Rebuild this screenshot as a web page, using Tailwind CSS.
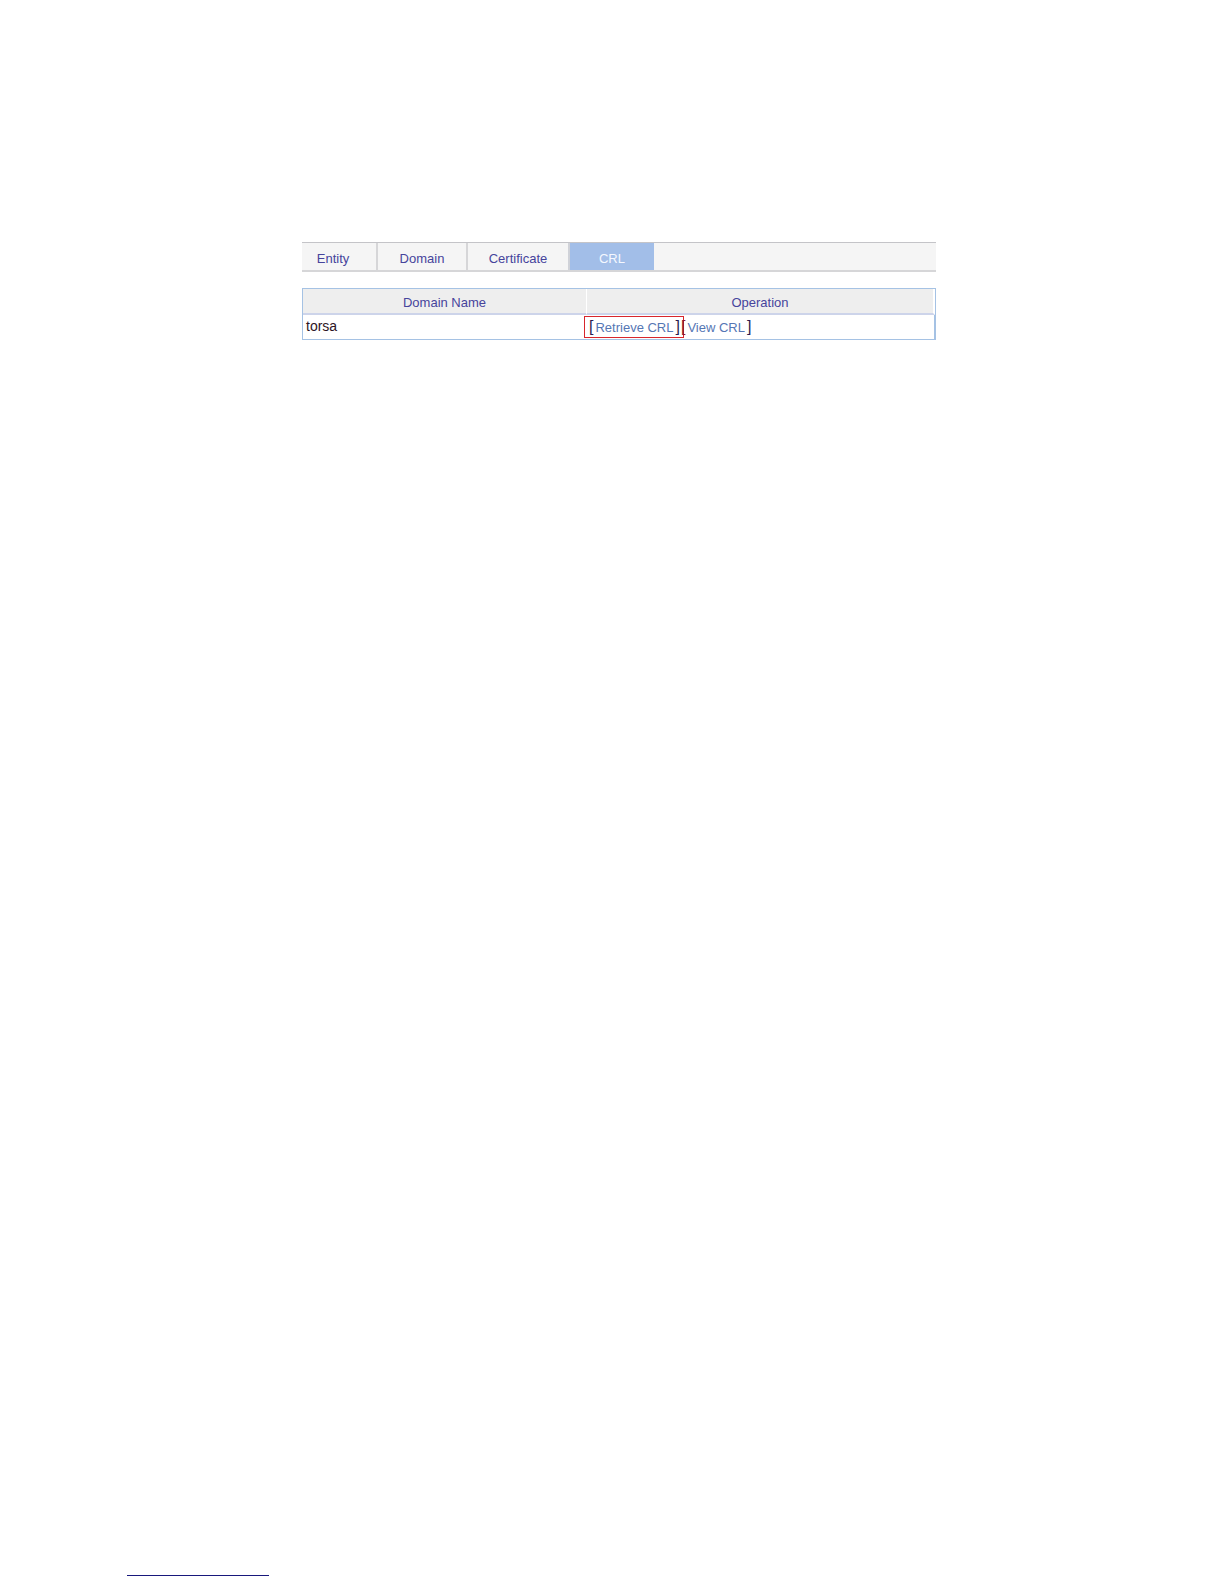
<!DOCTYPE html>
<html lang="en">
	<head>
		<meta charset="UTF-8">
		<meta name="viewport" content="width=device-width, initial-scale=1.0">
		<title>CRL</title>
		<script src="https://cdn.jsdelivr.net/npm/@tailwindcss/browser@4"></script>
	</head>
	<body class="bg-white min-h-screen flex flex-col justify-between font-['Liberation_Sans',Arial,sans-serif] text-[13px] text-[#46449c]">
		<main class="pt-[242px] pl-[302px] pr-[288px]">
			<!-- Tabs -->
			<nav class="flex h-[30px] bg-[#f5f5f5] border-t border-t-[#c4c4c8] border-b-2 border-b-[#d6d6d8] leading-[22px]">
				<a href="#entity" class="w-[76px] pt-[5px] pr-3 text-center border-r-2 border-[#d6d6d8]">Entity</a>
				<a href="#domain" class="w-[90px] pt-[5px] text-center border-r-2 border-[#d6d6d8]">Domain</a>
				<a href="#certificate" class="w-[102px] pt-[5px] text-center border-r-2 border-[#d0d2d8]">Certificate</a>
				<a href="#crl" aria-current="page" class="w-[84px] pt-[5px] text-center bg-[#a2bee8] text-[#f4f8ff]">CRL</a>
			</nav>

			<!-- Domain list -->
			<table class="w-full mt-4 table-fixed border-separate border-spacing-0 border border-[#a5c2e4]">
				<thead>
					<tr class="h-[26px] bg-[#eeeeee] leading-5">
						<th class="w-[284px] p-0 pt-1 font-normal border-b-2 border-b-[#cdd4ea] border-r border-r-white">Domain Name</th>
						<th class="p-0 pt-1 font-normal border-b-2 border-b-[#cdd4ea] border-r-2 border-r-white">Operation</th>
					</tr>
				</thead>
				<tbody>
					<tr class="h-6">
						<td class="p-0 pt-px pl-[3px] align-top text-sm text-[#2c1424]">torsa</td>
						<td class="p-0 border-r border-[#a5c2e4]">
							<div class="flex items-center -ml-[3px] leading-5 text-[#5576b4]">
								<span class="flex h-[22px] items-center border border-[#d8262c] pl-1 pr-[3px]">
									<span class="text-base text-[#2c1c50]">[</span><a href="#retrieve" class="pt-0.5 px-[2px]">Retrieve CRL</a><span class="text-base text-[#2c1c50]">]</span>
								</span>
								<span class="flex items-center -ml-[3px]">
									<span class="text-base text-[#8c1430]">[</span><a href="#view" class="pt-0.5 px-[2px]">View CRL</a><span class="text-base text-[#2c1c50]">]</span>
								</span>
							</div>
						</td>
					</tr>
				</tbody>
			</table>
		</main>

		<footer class="pl-[127px] pb-2">
			<hr class="w-[142px] border-t border-[#18187c]">
		</footer>
	</body>
</html>
